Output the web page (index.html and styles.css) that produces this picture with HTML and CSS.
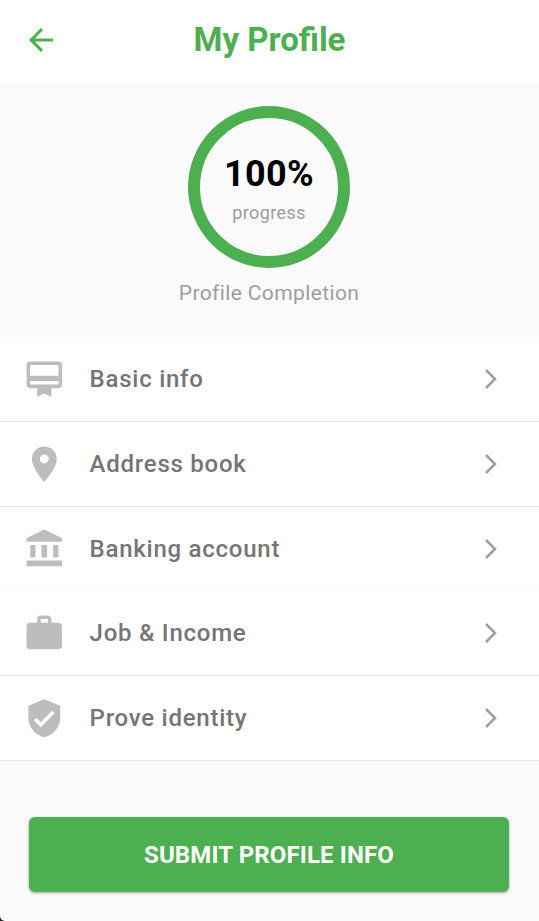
FILE: index.html
```html
<!DOCTYPE html>
<html lang="en">
<head>
<meta charset="utf-8">
<title>My Profile</title>
<link rel="stylesheet" href="styles.css">
</head>
<body>
<div class="screen">
  <header class="app-bar">
    <button class="back" aria-label="Back">
      <svg viewBox="0 0 24 24"><path d="M20 11H7.830l5.590-5.590L12 4l-8 8 8 8 1.410-1.410L7.830 13H20z"/></svg>
    </button>
    <h1 class="title">My Profile</h1>
  </header>
  <section class="summary">
    <div class="ring">
      <span class="percent">100%</span>
      <span class="caption">progress</span>
    </div>
    <p class="completion">Profile Completion</p>
  </section>
  <nav class="menu">
    <a class="row">
      <svg class="icon" viewBox="0 0 24 24"><path d="M20 2H4c-1.11 0-2 .89-2 2v11c0 1.11.89 2 2 2h4v5l4-2 4 2v-5h4c1.11 0 2-.89 2-2V4c0-1.11-.89-2-2-2zm0 13H4v-2h16v2zm0-5H4V4h16v6z"/></svg>
      <span class="label">Basic info</span>
      <svg class="chevron" viewBox="0 0 14 22"><path d="M2 2l9 9-9 9"/></svg>
    </a>
    <a class="row">
      <svg class="icon" viewBox="0 0 24 24"><path d="M12 2C8.13 2 5 5.13 5 9c0 5.25 7 13 7 13s7-7.75 7-13c0-3.87-3.13-7-7-7zm0 9.5a2.5 2.5 0 0 1 0-5 2.5 2.5 0 0 1 0 5z"/></svg>
      <span class="label">Address book</span>
      <svg class="chevron" viewBox="0 0 14 22"><path d="M2 2l9 9-9 9"/></svg>
    </a>
    <a class="row row-joined">
      <svg class="icon" viewBox="0 0 24 24"><path d="M12 1.4L2 6.3v2h20v-2zM4.1 10.1h2.9v7.1H4.1zM10.4 10.1h3.2v7.1h-3.2zM17 10.1h2.9v7.1H17zM2 18.9h20v3.2H2z"/></svg>
      <span class="label">Banking account</span>
      <svg class="chevron" viewBox="0 0 14 22"><path d="M2 2l9 9-9 9"/></svg>
    </a>
    <a class="row">
      <svg class="icon" viewBox="0 0 24 24"><path d="M20 6h-4V4c0-1.11-.89-2-2-2h-4c-1.11 0-2 .89-2 2v2H4c-1.11 0-2 .89-2 2v11c0 1.11.89 2 2 2h16c1.11 0 2-.89 2-2V8c0-1.11-.89-2-2-2zm-6 0h-4V4h4v2z"/></svg>
      <span class="label">Job &amp; Income</span>
      <svg class="chevron" viewBox="0 0 14 22"><path d="M2 2l9 9-9 9"/></svg>
    </a>
    <a class="row">
      <svg class="icon" viewBox="0 0 24 24"><path d="M12 1.2L3 4.9V12c0 5.2 4.2 9.7 9 10.7 4.8-1 9-5.5 9-10.7V4.9zM10 17l-3.9-3.9 1.4-1.4L10 14.2l6.4-6.4 1.4 1.4z"/></svg>
      <span class="label">Prove identity</span>
      <svg class="chevron" viewBox="0 0 14 22"><path d="M2 2l9 9-9 9"/></svg>
    </a>
  </nav>
  <footer class="actions">
    <button class="submit">SUBMIT PROFILE INFO</button>
  </footer>
</div>
</body>
</html>
```
FILE: styles.css
```css
* {
  box-sizing: border-box;
}

html {
  background: #222;
}

body {
  margin: 0;
  font-family: Roboto, sans-serif;
}

.screen {
  display: flex;
  flex-direction: column;
  height: 921px;
  overflow: hidden;
  background: #fafafa;
  border-bottom-left-radius: 5px;
}

.app-bar {
  display: grid;
  grid-template-columns: 82px 1fr 82px;
  align-items: center;
  height: 82px;
  padding-bottom: 2px;
  background: #fff;
}

.back {
  display: flex;
  justify-content: center;
  padding: 0;
  border: 0;
  background: none;
}

.back svg {
  width: 36px;
  height: 36px;
  fill: #4caf50;
}

.title {
  margin: 0;
  font-size: 33px;
  line-height: 40px;
  font-weight: 700;
  text-align: center;
  color: #4caf50;
}

.summary {
  display: flex;
  flex-direction: column;
  align-items: center;
  height: 255px;
  padding: 24px 1px 0 0;
}

.ring {
  display: flex;
  flex-direction: column;
  align-items: center;
  width: 162px;
  height: 162px;
  padding-top: 34px;
  border: 12px solid #4caf50;
  border-radius: 50%;
}

.percent {
  font-size: 36px;
  line-height: 44px;
  font-weight: 700;
  letter-spacing: 0.4px;
  color: #000;
}

.caption {
  margin-top: 6px;
  font-size: 18px;
  line-height: 22px;
  letter-spacing: 0.4px;
  color: #9e9e9e;
}

.completion {
  margin: 12px 0 0;
  font-size: 21px;
  line-height: 26px;
  letter-spacing: 0.38px;
  color: #9e9e9e;
}

.row {
  display: flex;
  align-items: center;
  height: 85px;
  padding: 0 41px 0 22.7px;
  border-bottom: 1px solid #e6e6e6;
  background: #fff;
}

.row-joined {
  height: 84px;
  border-bottom-color: #fcfcfc;
}

.icon {
  width: 42.6px;
  height: 42.6px;
  fill: #bdbdbd;
}

.label {
  flex: 1;
  margin-left: 24.3px;
  font-size: 24px;
  font-weight: 500;
  letter-spacing: 0.75px;
  color: #757575;
}

.chevron {
  width: 14px;
  height: 22px;
  fill: none;
  stroke: #9e9e9e;
  stroke-width: 2.5;
}

.actions {
  padding: 56px 30px 0 29px;
}

.submit {
  width: 100%;
  height: 75px;
  border: 0;
  border-radius: 6px;
  background: #4caf50;
  box-shadow: 0 1px 3px rgba(0, 0, 0, 0.35);
  font-family: inherit;
  font-size: 24px;
  font-weight: 700;
  letter-spacing: 0.13px;
  color: #fff;
}
```
